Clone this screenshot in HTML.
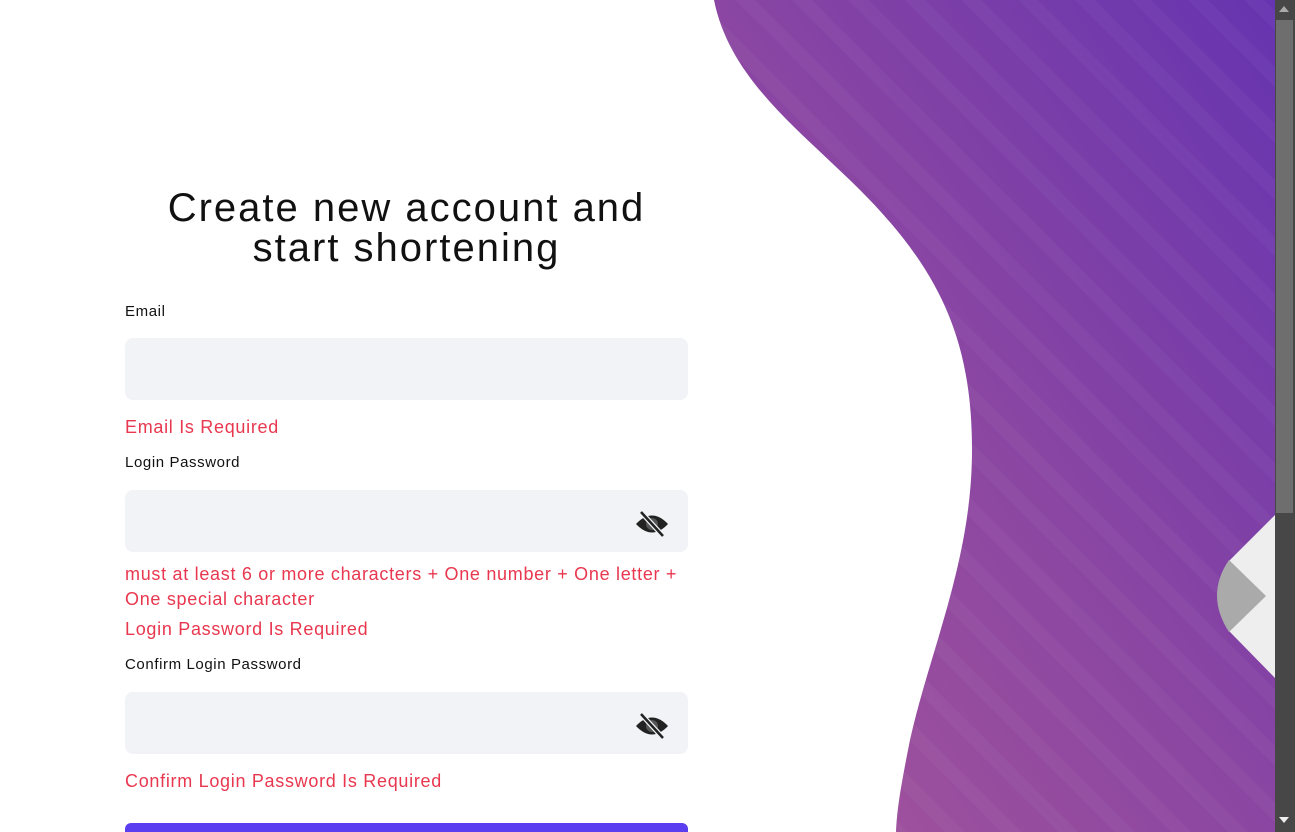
<!DOCTYPE html>
<html><head><style>
html,body{margin:0;padding:0;width:1295px;height:832px;overflow:hidden;background:#fff;font-family:"Liberation Sans",sans-serif;}
.abs{position:absolute}
h1{position:absolute;left:115px;width:583px;top:188px;margin:0;text-align:center;font-weight:300;font-size:40px;line-height:40px;color:#111;letter-spacing:2px}
.lbl{position:absolute;left:125px;font-size:15px;color:#111;letter-spacing:0.6px}
.inp{position:absolute;left:125px;width:563px;height:62px;background:#f2f3f7;border-radius:8px}
.err{position:absolute;left:125px;font-size:18px;color:#e8374f;line-height:25px;letter-spacing:0.7px;white-space:nowrap}
.eye{position:absolute;right:18px;top:19px}
</style></head><body>
<svg class="abs" style="left:0;top:0" width="1275" height="832">
<defs>
<linearGradient id="g" x1="1" y1="0" x2="0" y2="1">
<stop offset="0" stop-color="#6634b0"/><stop offset="0.5" stop-color="#8a46a2"/><stop offset="1" stop-color="#a6559a"/>
</linearGradient>
<pattern id="st" width="40" height="40" patternUnits="userSpaceOnUse" patternTransform="rotate(-45)">
<rect width="14" height="40" fill="rgba(255,255,255,0.03)"/>
</pattern>
</defs>
<path d="M714,0 C730,80 800,130 860,190 C940,270 972,340 972,450 C972,560 930,650 910,740 C900,790 897,810 896,832 L1275,832 L1275,0 Z" fill="url(#g)"/>
<path d="M714,0 C730,80 800,130 860,190 C940,270 972,340 972,450 C972,560 930,650 910,740 C900,790 897,810 896,832 L1275,832 L1275,0 Z" fill="url(#st)"/>
<path d="M1275,515 L1230,560 Q1205,595 1230,632 L1275,678 Z" fill="#eee"/>
<path d="M1229,560 Q1205,595 1229,632 L1266,596 Z" fill="#aaa"/>
</svg>
<div class="abs" style="left:1275px;top:0;width:20px;height:832px;background:#474747"></div>
<div class="abs" style="left:1276px;top:20px;width:17px;height:493px;background:#6e6e6e"></div>
<div class="abs" style="left:1279px;top:6px;width:0;height:0;border-left:5px solid transparent;border-right:5px solid transparent;border-bottom:6px solid #aaa"></div>
<div class="abs" style="left:1279px;top:817px;width:0;height:0;border-left:5px solid transparent;border-right:5px solid transparent;border-top:6px solid #eee"></div>

<h1>Create new account and<br>start shortening</h1>
<div class="lbl" style="top:303px">Email</div>
<div class="inp" style="top:338px"></div>
<div class="err" style="top:415px">Email Is Required</div>
<div class="lbl" style="top:454px">Login Password</div>
<div class="inp" style="top:490px"><svg class="eye" width="36" height="30" viewBox="0 0 36 30"><path d="M2,15 Q18,-2 34,15 Q18,32 2,15 Z" fill="#222"/><circle cx="18" cy="15" r="6" fill="#555"/><line x1="7" y1="3" x2="29" y2="27" stroke="#f2f3f7" stroke-width="5"/><line x1="7" y1="3" x2="29" y2="27" stroke="#222" stroke-width="2.5"/></svg></div>
<div class="err" style="top:562px">must at least 6 or more characters + One number + One letter +<br>One special character</div>
<div class="err" style="top:617px">Login Password Is Required</div>
<div class="lbl" style="top:656px">Confirm Login Password</div>
<div class="inp" style="top:692px"><svg class="eye" width="36" height="30" viewBox="0 0 36 30"><path d="M2,15 Q18,-2 34,15 Q18,32 2,15 Z" fill="#222"/><circle cx="18" cy="15" r="6" fill="#555"/><line x1="7" y1="3" x2="29" y2="27" stroke="#f2f3f7" stroke-width="5"/><line x1="7" y1="3" x2="29" y2="27" stroke="#222" stroke-width="2.5"/></svg></div>
<div class="err" style="top:769px">Confirm Login Password Is Required</div>
<div class="abs" style="left:125px;top:823px;width:563px;height:9px;background:#5a3ef0;border-radius:6px 6px 0 0"></div>
</body></html>
